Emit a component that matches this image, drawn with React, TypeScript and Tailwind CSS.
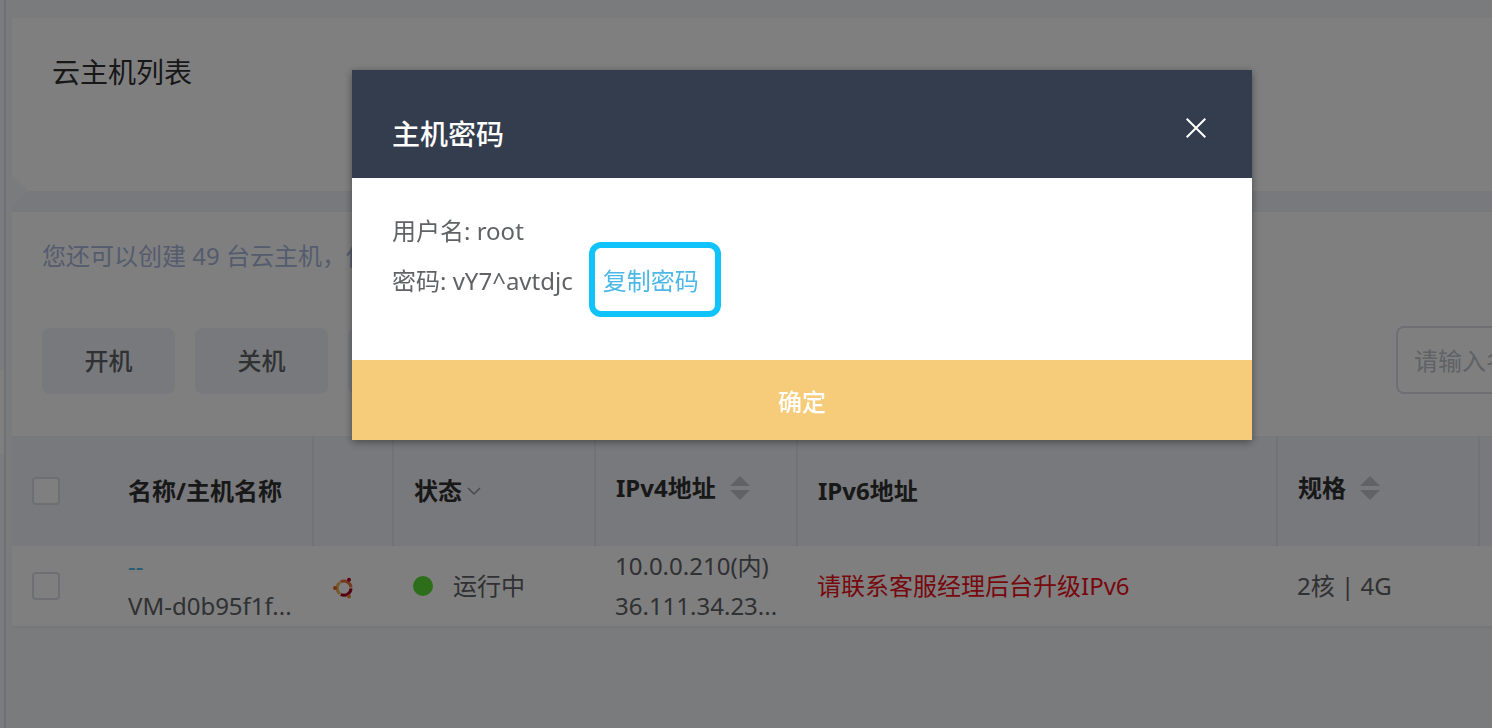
import type { ReactNode } from "react";

const columns = [
  { key: "check", width: "w-24" },
  { key: "name", width: "w-[205px]" },
  { key: "os", width: "w-20" },
  { key: "status", width: "w-[202px]" },
  { key: "ipv4", width: "w-[202px]" },
  { key: "ipv6", width: "w-[480px]" },
  { key: "spec", width: "w-[202px]" },
  { key: "more", width: "w-auto" },
];

const SortIcon = () => (
  <svg viewBox="0 0 20 24" className="h-6 w-5 fill-[#c0c4cc]" aria-hidden="true">
    <path d="M10 0 20 10H0Z" />
    <path d="M0 14h20L10 24Z" />
  </svg>
);

const UbuntuIcon = () => (
  <svg viewBox="0 0 20 22" className="mt-1 h-[22px] w-5" fill="none" aria-label="Ubuntu">
    <g strokeWidth="3">
      <path d="M7.6 5A7 7 0 0 1 18 10.4" stroke="#e8743c" />
      <path d="M18 11.4A7 7 0 0 1 7.8 17.4" stroke="#b5002a" />
      <path d="M7 16.8A7 7 0 0 1 7 5.4" stroke="#f0b04c" />
    </g>
    <circle cx="2" cy="11" r="2" fill="#e8601c" />
    <circle cx="16" cy="2.8" r="2" fill="#b5002a" />
    <circle cx="16" cy="19.4" r="2" fill="#f08c28" />
  </svg>
);

const Checkbox = ({ label }: { label: string }) => (
  <input
    type="checkbox"
    aria-label={label}
    className="block size-7 appearance-none rounded-sm border-2 border-[#dcdfe6] bg-white"
  />
);

const ToolButton = ({ children }: { children?: ReactNode }) => (
  <button type="button" className="h-[66px] w-[133px] shrink-0 rounded-lg bg-[#f0f2f8] font-medium text-[#606266]">
    {children}
  </button>
);

const HostTable = () => (
  <table className="w-full table-fixed border-collapse text-left">
    <colgroup>
      {columns.map((c) => (
        <col key={c.key} className={c.width} />
      ))}
    </colgroup>
    <thead>
      <tr className="h-[110px] bg-[#f0f2f8] text-[#303133] [&>th+th]:border-r-2 [&>th]:border-[#e4e7ef] [&>th]:px-5">
        <th>
          <Checkbox label="全选" />
        </th>
        <th>名称/主机名称</th>
        <th />
        <th>
          <span className="flex items-center gap-1">
            状态
            <svg viewBox="0 0 16 10" className="h-2.5 w-4 fill-none stroke-[#909399]" aria-hidden="true">
              <path d="m2 2 6 6 6-6" strokeWidth="1.5" />
            </svg>
          </span>
        </th>
        <th>
          <span className="flex items-center gap-3.5 pb-1.5">
            IPv4地址
            <SortIcon />
          </span>
        </th>
        <th>IPv6地址</th>
        <th>
          <span className="flex items-center gap-3.5 pb-1.5">
            规格
            <SortIcon />
          </span>
        </th>
        <th />
      </tr>
    </thead>
    <tbody>
      <tr className="border-b-2 border-[#ebeef5] bg-white leading-10 text-[#606266] [&>td]:px-5">
        <td>
          <Checkbox label="选择主机" />
        </td>
        <td className="pr-2!">
          <a href="#host" className="block text-[#4db8e8]">
            --
          </a>
          <span className="block">VM-d0b95f1f...</span>
        </td>
        <td>
          <UbuntuIcon />
        </td>
        <td>
          <span className="flex items-center gap-5">
            <i className="size-5 rounded-full bg-[#58dc34]" />
            运行中
          </span>
        </td>
        <td className="pr-2!">
          <span className="block">10.0.0.210(内)</span>
          <span className="block">36.111.34.23...</span>
        </td>
        <td className="text-[#f01020]">请联系客服经理后台升级IPv6</td>
        <td>2核 | 4G</td>
        <td />
      </tr>
    </tbody>
  </table>
);

const PasswordDialog = () => (
  <div className="fixed inset-0 flex items-start justify-center bg-black/50 pt-[70px] pl-28">
    <div role="dialog" aria-labelledby="dialog-title" className="w-[900px] bg-white shadow-[0_2px_8px_rgba(0,0,0,0.4)]">
      <header className="flex h-[108px] items-center justify-between bg-[#343d4e] pr-[46px] pl-10 text-white">
        <h2 id="dialog-title" className="pt-[22px] text-[28px] font-medium">
          主机密码
        </h2>
        <button type="button" aria-label="关闭" className="pt-2">
          <svg viewBox="0 0 20 20" className="size-5 fill-none stroke-white">
            <path d="m.7.7 18.6 18.6M19.3.7.7 19.3" strokeWidth="2" />
          </svg>
        </button>
      </header>
      <div className="h-[182px] px-10 pt-7 leading-[50px] text-[#606266]">
        <p>用户名: root</p>
        <p className="flex items-center gap-4">
          密码: vY7^avtdjc
          <button
            type="button"
            className="-mt-4 -mb-3 h-[75px] w-[132px] rounded-xl border-6 border-[#10c4fb] pt-1 pr-2 text-[#4db8e8]"
          >
            复制密码
          </button>
        </p>
      </div>
      <button type="button" className="h-20 w-full bg-[#f6cc7a] pt-1 font-medium text-white">
        确定
      </button>
    </div>
  </div>
);

export default function App() {
  return (
    <div className="flex min-h-screen overflow-hidden bg-[#f4f6fa] font-['Noto_Sans','Noto_Sans_CJK_SC',sans-serif] text-2xl">
      <aside className="w-1.5 shrink-0 border-r-2 border-[#e0e3ea] pt-[370px]">
        <div className="h-[84px] bg-white" />
      </aside>
      <main className="min-w-[1640px] flex-1 pt-[18px] pl-1.5">
        <section className="h-[173px] bg-white px-10 pt-9 [clip-path:polygon(0_0,100%_0,100%_100%,16px_100%,0_calc(100%-16px))]">
          <h1 className="text-[28px] text-[#303133]">云主机列表</h1>
        </section>
        <div className="h-[21px] bg-[#f0f2f8] [clip-path:polygon(16px_0,100%_0,100%_100%,0_100%,0_17px)]" />
        <section className="bg-white">
          <p className="px-[30px] pt-7 text-[#a9b8dc]">您还可以创建 49 台云主机，使</p>
          <div className="flex items-end gap-5 px-[30px] pt-[54px] pb-[42px]">
            <ToolButton>开机</ToolButton>
            <ToolButton>关机</ToolButton>
            <ToolButton />
            <input
              type="text"
              aria-label="搜索"
              placeholder="请输入名称"
              className="ml-auto h-[68px] w-[220px] rounded-lg border-2 border-[#dcdfe6] px-4 placeholder:text-[#c0c4cc]"
            />
          </div>
          <HostTable />
        </section>
      </main>
      <PasswordDialog />
    </div>
  );
}
